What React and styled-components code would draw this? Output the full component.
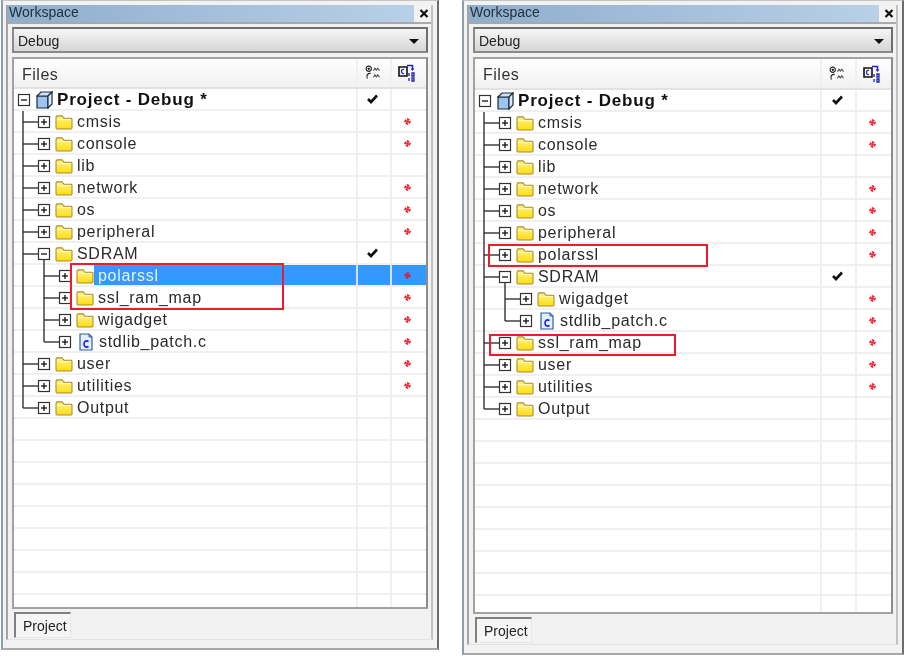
import styled, { createGlobalStyle } from 'styled-components';

const GlobalStyle = createGlobalStyle`
  html, body {
    margin: 0;
    padding: 0;
    background: #fff;
    font-family: "Liberation Sans", Arial, sans-serif;
  }
`;

const Page = styled.div`
  display: flex;
  gap: 23px;
  width: 905px;
  height: 656px;
  padding-left: 1px;
  box-sizing: border-box;
  overflow: hidden;
  filter: blur(0.35px);
`;

const Win = styled.div`
  position: relative;
  flex: none;
  width: ${(p) => p.$width}px;
  height: ${(p) => p.$height}px;
  box-sizing: border-box;
  display: flex;
  flex-direction: column;
  padding: 4px 0 0 0;
  background: #f2f2f2;
  border-left: 2px solid #8b9db0;
  border-right: 2px solid #6c6c6c;
  border-bottom: 2px solid #a8a8a8;
  border-top: 1px solid #c4c4c4;
`;

const Inner = styled.div`
  flex: 1;
  display: flex;
  flex-direction: column;
  margin: 0 4px 8px 3px;
  border-left: 2px solid #a4a4a4;
  border-right: 2px solid #c2c2c2;
  border-bottom: 1px solid #e4e4e4;
  min-height: 0;
`;

const TitleBar = styled.div`
  display: flex;
  align-items: center;
  height: 17px;
  flex: none;
`;

const Title = styled.div`
  flex: 1;
  height: 17px;
  line-height: 15px;
  font-size: 14px;
  color: #24303c;
  padding-left: 1px;
  background: linear-gradient(90deg, #8eaecd, #b8d0e8);
`;

const CloseBox = styled.div`
  flex: none;
  width: 17px;
  height: 17px;
  padding-left: 3px;
  box-sizing: border-box;
  display: flex;
  align-items: center;
  justify-content: center;
`;

const Rule = styled.div`
  flex: none;
  height: 2px;
  background: #a9a9a9;
`;

const Body = styled.div`
  flex: 1;
  display: flex;
  flex-direction: column;
  padding: 3px 3px 0 4px;
  min-height: 0;
`;

const Combo = styled.div`
  flex: none;
  height: 26px;
  box-sizing: border-box;
  display: flex;
  align-items: center;
  justify-content: space-between;
  padding: 2px 7px 0 4px;
  font-size: 14px;
  color: #222;
  border: 2px solid #7d7d7d;
  border-color: #6e6e6e #6e6e6e #8a8a8a #8a8a8a;
  background: linear-gradient(180deg, #f6f6f6, #d6d6d6);
`;

const Arrow = styled.div`
  width: 0;
  height: 0;
  border-left: 5px solid transparent;
  border-right: 5px solid transparent;
  border-top: 5px solid #111;
`;

const List = styled.div`
  flex: 1;
  margin-top: 4px;
  min-height: 0;
  overflow: hidden;
  background: #fff;
  border: 2px solid #a2a2a2;
  border-right-color: #8c8c8c;
`;

const Head = styled.div`
  display: flex;
  height: ${(p) => p.$height}px;
  box-sizing: border-box;
  border-bottom: 2px solid #e2e2e2;
  background: linear-gradient(180deg, #ffffff, #f1f1f1);
`;

const HeadName = styled.div`
  flex: 1;
  padding-left: 8px;
  font-size: 16px;
  letter-spacing: 0.5px;
  line-height: 31px;
  color: #333;
`;

const Col = styled.div`
  flex: none;
  width: ${(p) => p.$width}px;
  box-sizing: border-box;
  padding-right: 3px;
  border-left: 2px solid ${(p) => (p.$selected ? '#cfe5ff' : '#f0f0f0')};
  display: flex;
  align-items: center;
  justify-content: center;
  background: ${(p) => (p.$selected ? '#3399ff' : 'transparent')};
`;

const Row = styled.div`
  display: flex;
  height: 22px;
  box-sizing: border-box;
  border-bottom: 2px solid #f0f0f0;
`;

const NameCell = styled.div`
  flex: 1;
  display: flex;
  align-items: center;
  min-width: 0;
  height: 22px;
`;

const Label = styled.span`
  display: block;
  align-self: flex-start;
  height: 20px;
  line-height: 21px;
  font-size: 16px;
  letter-spacing: 0.7px;
  white-space: nowrap;
  padding-left: 4px;
  color: #2a2a2a;
  ${(p) => p.$selected && 'flex: 1; background: #3399ff; color: #e6f3ff;'}
`;

const RootLabel = styled.span`
  font-size: 17px;
  font-weight: bold;
  letter-spacing: 0.8px;
  line-height: 22px;
  color: #111;
  margin-left: 4px;
  white-space: nowrap;
`;

const Tabs = styled.div`
  flex: none;
  height: 30px;
  padding: 3px 0 0 2px;
  box-sizing: border-box;
`;

const Tab = styled.div`
  width: 57px;
  height: 26px;
  box-sizing: border-box;
  border-top: 2px solid #808080;
  border-left: 2px solid #808080;
  border-right: 1px solid #e8e8e8;
  border-bottom: 1px solid #e8e8e8;
  background: #f5f5f5;
  font-size: 14px;
  line-height: 24px;
  padding-left: 7px;
  color: #222;
`;

const Callout = styled.div`
  position: absolute;
  left: ${(p) => p.$x}px;
  top: ${(p) => p.$y}px;
  width: ${(p) => p.$w}px;
  height: ${(p) => p.$h}px;
  box-sizing: border-box;
  border: 2px solid #ec1c2e;
  pointer-events: none;
`;

const Gutter = styled.svg`
  flex: none;
  display: block;
`;

const Icon = styled.svg`
  flex: none;
  display: block;
  margin-left: ${(p) => p.$left || 0}px;
`;

const boxAt = (cx, open) => (
  <g>
    <rect x={cx - 5.5} y={5.5} width={11} height={11} fill="#fff" stroke="#333" strokeWidth="1.2" />
    <path d={`M${cx - 3} 11H${cx + 3}`} stroke="#111" strokeWidth="1.3" />
    {!open && <path d={`M${cx} 8V14`} stroke="#111" strokeWidth="1.3" />}
  </g>
);

// connector lines and +/- box for one tree row
const TreeLines = ({ depth, last, open, inner }) => {
  if (depth === 0) {
    return (
      <Gutter width="18" height="22">
        {boxAt(10, open)}
      </Gutter>
    );
  }
  const stem = depth === 1 ? 9 : 30;
  const cx = stem + 21;
  return (
    <Gutter width={cx + 7} height="22">
      {depth === 2 && <path d="M9 0V22" stroke="#222" strokeWidth="1.3" />}
      <path d={`M${stem} 0V${last ? 11 : 22}`} stroke="#222" strokeWidth="1.3" />
      <path d={`M${stem} 11H${cx}`} stroke="#222" strokeWidth="1.3" />
      {inner && <path d={`M${cx} 11V22`} stroke="#222" strokeWidth="1.3" />}
      {boxAt(cx, open)}
    </Gutter>
  );
};

const Folder = () => (
  <Icon $left={4} width="18" height="16" viewBox="0 0 19 17">
    <defs>
      <linearGradient id="folderFill" x1="0" y1="0" x2="0" y2="1">
        <stop offset="0" stopColor="#fff48a" />
        <stop offset="1" stopColor="#ffdc10" />
      </linearGradient>
    </defs>
    <path
      d="M1 15V3.5C1 2.5 1.7 2 2.5 2H7.5L9.5 4.5H17C17.6 4.5 18 5 18 5.5V15C18 15.6 17.6 16 17 16H2C1.4 16 1 15.6 1 15Z"
      fill="url(#folderFill)"
      stroke="#a98a28"
      strokeWidth="1.1"
    />
    <path d="M2 6H17" stroke="#fffbc8" strokeWidth="1" />
  </Icon>
);

const CFile = () => (
  <Icon $left={5} width="18" height="18" viewBox="0 0 18 18">
    <path d="M3 1H12L15 4V17H3Z" fill="#e4effc" stroke="#2f5f9e" strokeWidth="1.2" />
    <path d="M12 1V4H15" fill="none" stroke="#2f5f9e" strokeWidth="1" />
    <path d="M11.5 8.5C9 7 7 8.5 7 11C7 13.5 9 15 11.5 13.5" fill="none" stroke="#1a1af0" strokeWidth="1.6" />
  </Icon>
);

const Cube = () => (
  <Icon $left={4} width="17" height="18" viewBox="0 0 17 18">
    <path d="M1 5H12V17H1Z" fill="#9cc4ee" stroke="#1c2c3c" strokeWidth="1.2" />
    <path d="M1 5L5 1H16L12 5Z" fill="#cfe2f6" stroke="#1c2c3c" strokeWidth="1.2" />
    <path d="M12 17L16 13V1L12 5Z" fill="#dfeaf6" stroke="#1c2c3c" strokeWidth="1.2" />
  </Icon>
);

const Check = () => (
  <svg width="11" height="10" viewBox="0 0 11 10">
    <path d="M1 5L4 8L10 1.5" fill="none" stroke="#111" strokeWidth="2.6" />
  </svg>
);

// four-armed pinwheel marker
const Star = () => (
  <svg width="7" height="7" viewBox="0 0 7 7">
    <path
      d="M3.5 3.5L3 0L5.5 1.5ZM3.5 3.5L7 3L5.5 5.5ZM3.5 3.5L4 7L1.5 5.5ZM3.5 3.5L0 4L1.5 1.5Z"
      fill="#ee1122"
      stroke="#ee1122"
      strokeWidth="0.4"
    />
  </svg>
);

const Close = () => (
  <svg width="10" height="9" viewBox="0 0 10 9">
    <path d="M1.5 1L8.5 8M8.5 1L1.5 8" stroke="#111" strokeWidth="2.2" />
  </svg>
);

const WatchIcon = () => (
  <svg width="16" height="16" viewBox="0 0 17 17">
    <circle cx="4" cy="4" r="2.8" fill="none" stroke="#222" strokeWidth="1.2" />
    <circle cx="4" cy="4" r="1.2" fill="#111" />
    <path d="M6 9C3 8.5 1 11 2.5 14.5" fill="none" stroke="#222" strokeWidth="1.2" />
    <path d="M9 6L10.5 3.5L12 5.5L13.5 3.5L15.5 6" fill="none" stroke="#444" strokeWidth="1.1" />
    <path d="M9 13L10.5 10.5L12 12.5L13.5 10.5L15.5 13" fill="none" stroke="#444" strokeWidth="1.1" />
  </svg>
);

const BuildIcon = () => (
  <svg width="19" height="18" viewBox="0 0 19 18">
    <path d="M1 3H9V12H1Z" fill="#f4f4f4" stroke="#111" strokeWidth="1.6" />
    <path d="M6 5.5C4 5 3.5 6.5 3.5 7.5C3.5 8.5 4.5 10 6 9.5" fill="none" stroke="#2222cc" strokeWidth="1.2" />
    <path d="M9 1.5H14.5V5" fill="none" stroke="#2222cc" strokeWidth="1.5" />
    <path d="M12.5 4.5H16.5L14.5 7Z" fill="#2222cc" />
    <path d="M11 9V12M14 9H16V12H14ZM11 14V17M14 14H16V17H14Z" fill="none" stroke="#2222aa" strokeWidth="1.3" />
  </svg>
);

const LeftRows = [
  { name: 'cmsis', depth: 1, star: true },
  { name: 'console', depth: 1, star: true },
  { name: 'lib', depth: 1 },
  { name: 'network', depth: 1, star: true },
  { name: 'os', depth: 1, star: true },
  { name: 'peripheral', depth: 1, star: true },
  { name: 'SDRAM', depth: 1, open: true, inner: true, check: true },
  { name: 'polarssl', depth: 2, star: true, selected: true },
  { name: 'ssl_ram_map', depth: 2, star: true },
  { name: 'wigadget', depth: 2, star: true },
  { name: 'stdlib_patch.c', depth: 2, star: true, file: true, last: true },
  { name: 'user', depth: 1, star: true },
  { name: 'utilities', depth: 1, star: true },
  { name: 'Output', depth: 1, last: true },
];

const RightRows = [
  { name: 'cmsis', depth: 1, star: true },
  { name: 'console', depth: 1, star: true },
  { name: 'lib', depth: 1 },
  { name: 'network', depth: 1, star: true },
  { name: 'os', depth: 1, star: true },
  { name: 'peripheral', depth: 1, star: true },
  { name: 'polarssl', depth: 1, star: true },
  { name: 'SDRAM', depth: 1, open: true, inner: true, check: true },
  { name: 'wigadget', depth: 2, star: true },
  { name: 'stdlib_patch.c', depth: 2, star: true, file: true, last: true },
  { name: 'ssl_ram_map', depth: 1, star: true },
  { name: 'user', depth: 1, star: true },
  { name: 'utilities', depth: 1, star: true },
  { name: 'Output', depth: 1, last: true },
];

const Workspace = ({ width, height, headHeight, checkWidth, rows, callouts }) => (
  <Win $width={width} $height={height}>
    <Inner>
      <TitleBar>
        <Title>Workspace</Title>
        <CloseBox>
          <Close />
        </CloseBox>
      </TitleBar>
      <Rule />
      <Body>
        <Combo>
          Debug
          <Arrow />
        </Combo>
        <List>
          <Head $height={headHeight}>
            <HeadName>Files</HeadName>
            <Col $width={checkWidth}>
              <WatchIcon />
            </Col>
            <Col $width={36}>
              <BuildIcon />
            </Col>
          </Head>
          <Row>
            <NameCell>
              <TreeLines depth={0} open />
              <Cube />
              <RootLabel>Project - Debug *</RootLabel>
            </NameCell>
            <Col $width={checkWidth}>
              <Check />
            </Col>
            <Col $width={36} />
          </Row>
          {rows.map((row) => (
            <Row key={row.name}>
              <NameCell>
                <TreeLines depth={row.depth} last={row.last} open={row.open} inner={row.inner} />
                {row.file ? <CFile /> : <Folder />}
                <Label $selected={row.selected}>{row.name}</Label>
              </NameCell>
              <Col $width={checkWidth} $selected={row.selected}>
                {row.check && <Check />}
              </Col>
              <Col $width={36} $selected={row.selected}>
                {row.star && <Star />}
              </Col>
            </Row>
          ))}
          {Array.from({ length: 9 }, (_, i) => (
            <Row key={i}>
              <NameCell />
              <Col $width={checkWidth} />
              <Col $width={36} />
            </Row>
          ))}
        </List>
        <Tabs>
          <Tab>Project</Tab>
        </Tabs>
      </Body>
    </Inner>
    {callouts.map((c) => (
      <Callout key={c.y} $x={c.x} $y={c.y} $w={c.w} $h={c.h} />
    ))}
  </Win>
);

const App = () => (
  <>
    <GlobalStyle />
    <Page>
      <Workspace
        width={438}
        height={650}
        headHeight={30}
        checkWidth={34}
        rows={LeftRows}
        callouts={[{ x: 67, y: 262, w: 214, h: 47 }]}
      />
      <Workspace
        width={442}
        height={655}
        headHeight={31}
        checkWidth={35}
        rows={RightRows}
        callouts={[
          { x: 24, y: 243, w: 220, h: 23 },
          { x: 25, y: 333, w: 187, h: 22 },
        ]}
      />
    </Page>
  </>
);

export default App;
